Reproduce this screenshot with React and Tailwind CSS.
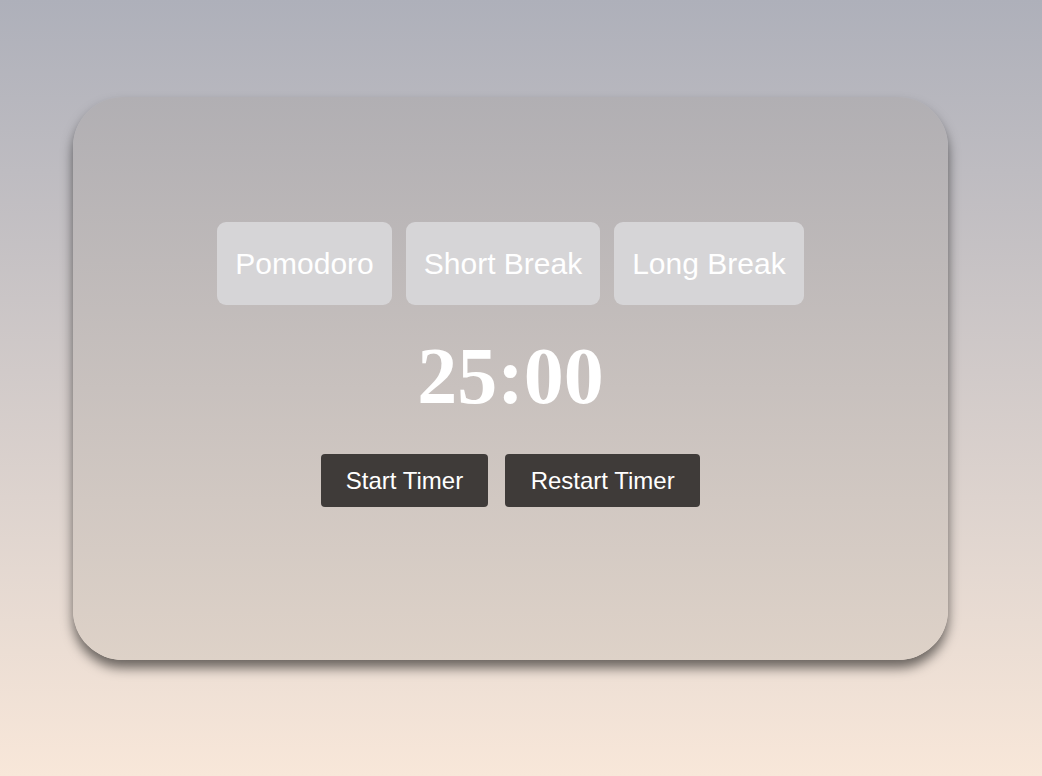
import React, { useState } from 'react';

const modes = [
  { label: 'Pomodoro', time: '25:00' },
  { label: 'Short Break', time: '05:00' },
  { label: 'Long Break', time: '15:00' },
];

const App = () => {
  const [mode, setMode] = useState(0);

  return (
    <div className="min-h-[776px] w-full bg-gradient-to-b from-[#aeb0ba] to-[#f8e7d9] pt-[97px] font-['Liberation_Sans',Arial,sans-serif]">
      <div className="ml-[73px] flex h-[563px] w-[875px] flex-col items-center rounded-[50px] bg-gradient-to-b from-[#b1afb3] to-[#ded2c8] pt-[125px] shadow-[0_8px_12px_rgba(0,0,0,0.55)]">
        {/* modos */}
        <div className="flex gap-[14px]">
          {modes.map((m, i) => (
            <button
              key={m.label}
              onClick={() => setMode(i)}
              className="h-[83px] rounded-[9px] bg-[#d6d5d7] px-[18px] text-[30px] text-white"
            >
              {m.label}
            </button>
          ))}
        </div>

        <div className="mt-[31px] font-['Liberation_Serif','Times_New_Roman',serif] text-[80px] font-bold leading-none text-white">
          {modes[mode].time}
        </div>

        <div className="mt-[38px] flex gap-[17px]">
          <button className="h-[53px] rounded bg-[#3f3b39] px-[25px] text-[24px] text-white">
            Start Timer
          </button>
          <button className="h-[53px] rounded bg-[#3f3b39] px-[25.5px] text-[24px] text-white">
            Restart Timer
          </button>
        </div>
      </div>
    </div>
  );
};

export default App;
